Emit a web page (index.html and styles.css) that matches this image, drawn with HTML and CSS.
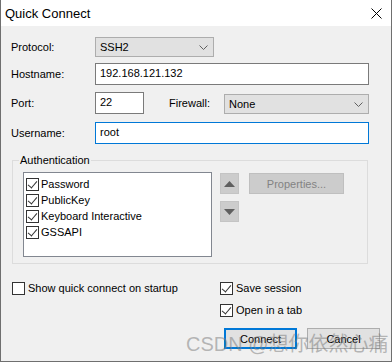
FILE: index.html
```html
<!DOCTYPE html>
<html lang="en">
<head>
    <meta charset="UTF-8">
    <title>Quick Connect</title>
    <link rel="stylesheet" href="styles.css">
</head>
<body>
    <div class="window">
        <div class="titlebar">
            <span class="title">Quick Connect</span>
            <svg class="close" width="11" height="11" viewBox="0 0 11 11">
                <path d="M0.5 0.5 L10.5 10.5 M10.5 0.5 L0.5 10.5" stroke="#000" stroke-width="1" fill="none"/>
            </svg>
        </div>

        <div class="content">
            <div class="row row-protocol">
                <span class="label">Protocol:</span>
                <div class="select sel-protocol">
                    <span>SSH2</span>
                    <svg class="chev" width="9" height="5" viewBox="0 0 9 5"><path d="M0.5 0.5 L4.5 4.5 L8.5 0.5" stroke="#606060" fill="none"/></svg>
                </div>
            </div>

            <div class="row row-host">
                <span class="label">Hostname:</span>
                <div class="input wide">192.168.121.132</div>
            </div>

            <div class="row row-port">
                <span class="label">Port:</span>
                <div class="input port">22</div>
                <span class="label fw-label">Firewall:</span>
                <div class="select sel-fw">
                    <span>None</span>
                    <svg class="chev" width="9" height="5" viewBox="0 0 9 5"><path d="M0.5 0.5 L4.5 4.5 L8.5 0.5" stroke="#606060" fill="none"/></svg>
                </div>
            </div>

            <div class="row row-user">
                <span class="label">Username:</span>
                <div class="input wide focused">root</div>
            </div>

            <fieldset class="auth">
                <legend>Authentication</legend>
                <div class="auth-body">
                    <ul class="methods">
                        <li><span class="box checked"></span>Password</li>
                        <li><span class="box checked"></span>PublicKey</li>
                        <li><span class="box checked"></span>Keyboard Interactive</li>
                        <li><span class="box checked"></span>GSSAPI</li>
                    </ul>
                    <div class="arrows">
                        <div class="arrow-btn">
                            <svg width="11" height="6" viewBox="0 0 11 6"><path d="M5.5 0 L11 6 L0 6 Z" fill="#5f5f5f"/></svg>
                        </div>
                        <div class="arrow-btn">
                            <svg width="11" height="6" viewBox="0 0 11 6"><path d="M0 0 L11 0 L5.5 6 Z" fill="#5f5f5f"/></svg>
                        </div>
                    </div>
                    <div class="btn props">Properties...</div>
                </div>
            </fieldset>

            <div class="options">
                <div class="opt-left">
                    <div class="check"><span class="box"></span>Show quick connect on startup</div>
                </div>
                <div class="opt-right">
                    <div class="check"><span class="box checked"></span>Save session</div>
                    <div class="check"><span class="box checked"></span>Open in a tab</div>
                </div>
            </div>

            <div class="buttons">
                <div class="btn default">Connect</div>
                <div class="btn">Cancel</div>
            </div>
        </div>

        <div class="watermark">CSDN @想你依然心痛</div>
    </div>
</body>
</html>
```

FILE: styles.css
```css
body {
    margin: 0;
    font-family: "Liberation Sans", Arial, sans-serif;
    font-size: 11px;
    color: #000;
}
.window {
    position: relative;
    width: 392px;
    height: 362px;
    box-sizing: border-box;
    border: 1px solid #6f6f6f;
    border-top: none;
    background: #f0f0f0;
    overflow: hidden;
}
.titlebar {
    height: 26px;
    background: #fff;
    display: flex;
    align-items: center;
    justify-content: space-between;
    padding: 0 9px 0 4px;
}
.title {
    font-size: 13px;
}
.close {
    margin-top: 1px;
}
.content {
    padding: 0 10px;
}
.row {
    display: flex;
    align-items: center;
}
.row-protocol {
    margin-top: 11px;
    height: 20px;
}
.row-host {
    margin-top: 6px;
    height: 22px;
}
.row-port {
    margin-top: 7px;
    height: 22px;
}
.row-user {
    margin-top: 8px;
    height: 22px;
}
.label {
    width: 84px;
    flex: none;
}
.select {
    box-sizing: border-box;
    height: 20px;
    background: #e1e1e1;
    border: 1px solid #adadad;
    display: flex;
    align-items: center;
    justify-content: space-between;
    padding: 0 5px 0 4px;
}
.sel-protocol {
    width: 119px;
}
.sel-fw {
    width: 145px;
    margin-top: 2px;
}
.input {
    box-sizing: border-box;
    height: 22px;
    background: #fff;
    border: 1px solid #7a7a7a;
    padding: 0 4px;
    line-height: 18px;
}
.wide {
    width: 274px;
}
.port {
    width: 49px;
}
.fw-label {
    width: auto;
    margin-left: 25px;
    flex: 0 0 55px;
}
.focused {
    border-color: #0078d7;
}

.auth {
    margin: 9px 0 0 1px;
    padding: 5px 0 6px 0;
    width: 356px;
    box-sizing: border-box;
    border: 1px solid #dcdcdc;
}
.auth legend {
    margin-left: 6px;
    padding: 0 1px;
    line-height: 14px;
}
.auth-body {
    display: flex;
    align-items: flex-start;
    padding-left: 10px;
}
.methods {
    list-style: none;
    margin: 0;
    padding: 3px 0 0 2px;
    width: 189px;
    height: 85px;
    box-sizing: border-box;
    background: #fff;
    border: 1px solid #828790;
}
.methods li {
    height: 16px;
    display: flex;
    align-items: center;
}
.box {
    width: 13px;
    height: 13px;
    box-sizing: border-box;
    border: 1px solid #333;
    background: #fff;
    margin-right: 2px;
    flex: none;
    position: relative;
}
.box.checked::after {
    content: "";
    position: absolute;
    left: 3px;
    top: 0px;
    width: 4px;
    height: 8px;
    border: solid #333;
    border-width: 0 1px 1px 0;
    transform: rotate(40deg);
}
.arrows {
    margin: 1px 0 0 8px;
    display: flex;
    flex-direction: column;
    gap: 7px;
}
.arrow-btn {
    width: 19px;
    height: 21px;
    box-sizing: border-box;
    background: #cccccc;
    border: 1px solid #c4c4c4;
    display: flex;
    align-items: center;
    justify-content: center;
}
.btn {
    box-sizing: border-box;
    height: 21px;
    width: 73px;
    background: #e1e1e1;
    border: 1px solid #adadad;
    display: flex;
    align-items: center;
    justify-content: center;
}
.props {
    margin: 1px 0 0 10px;
    width: 95px;
    background: #cccccc;
    border-color: #bfbfbf;
    color: #838383;
}

.options {
    display: flex;
    margin-top: 16px;
}
.opt-left {
    width: 208px;
    padding-left: 1px;
}
.opt-right {
    display: flex;
    flex-direction: column;
    gap: 6px;
}
.check {
    height: 16px;
    display: flex;
    align-items: center;
}
.check .box {
    margin-right: 3px;
}
.buttons {
    display: flex;
    justify-content: flex-end;
    gap: 10px;
    margin-top: 10px;
    padding-right: 1px;
}
.default {
    border: 2px solid #0078d7;
}
.watermark {
    position: absolute;
    left: 185px;
    top: 328px;
    font-family: "Liberation Sans", "Noto Sans CJK SC", sans-serif;
    font-size: 20px;
    color: rgba(120, 120, 120, 0.5);
    white-space: nowrap;
}
```
